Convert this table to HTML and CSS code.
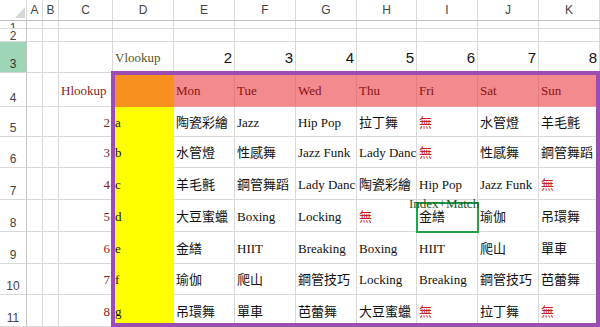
FILE: index.html
```html
<!DOCTYPE html>
<html lang="zh-Hant">
<head>
<meta charset="utf-8">
<title>Vlookup Hlookup</title>
<link rel="stylesheet" href="styles.css">
</head>
<body>
<div class="wrap">
  <div class="sheet">
    <!-- header row -->
    <div class="corner"><svg width="27" height="21" viewBox="0 0 27 21"><polygon points="25,7 25,18 15,18" fill="#d6d6d6"/></svg></div>
    <div class="ch">A</div><div class="ch">B</div><div class="ch">C</div><div class="ch">D</div><div class="ch">E</div><div class="ch">F</div><div class="ch">G</div><div class="ch">H</div><div class="ch">I</div><div class="ch">J</div><div class="ch">K</div>
    <!-- row 1 -->
    <div class="rh top">1</div><div class="c"></div><div class="c"></div><div class="c"></div><div class="c"></div><div class="c"></div><div class="c"></div><div class="c"></div><div class="c"></div><div class="c"></div><div class="c"></div><div class="c"></div>
    <!-- row 2 -->
    <div class="rh top">2</div><div class="c"></div><div class="c"></div><div class="c"></div><div class="c"></div><div class="c"></div><div class="c"></div><div class="c"></div><div class="c"></div><div class="c"></div><div class="c"></div><div class="c"></div>
    <!-- row 3 -->
    <div class="rh sel">3</div><div class="c"></div><div class="c"></div><div class="c"></div><div class="c olive">Vlookup</div><div class="c n">2</div><div class="c n">3</div><div class="c n">4</div><div class="c n">5</div><div class="c n">6</div><div class="c n">7</div><div class="c n">8</div>
    <!-- row 4 -->
    <div class="rh">4</div><div class="c"></div><div class="c"></div><div class="c dred">Hlookup</div><div class="c org"></div><div class="c pink">Mon</div><div class="c pink">Tue</div><div class="c pink">Wed</div><div class="c pink">Thu</div><div class="c pink">Fri</div><div class="c pink">Sat</div><div class="c pink">Sun</div>
    <!-- row 5 -->
    <div class="rh">5</div><div class="c"></div><div class="c"></div><div class="c dred r">2</div><div class="c yel">a</div><div class="c">陶瓷彩繪</div><div class="c">Jazz</div><div class="c">Hip Pop</div><div class="c">拉丁舞</div><div class="c red">無</div><div class="c">水管燈</div><div class="c">羊毛氈</div>
    <!-- row 6 -->
    <div class="rh">6</div><div class="c"></div><div class="c"></div><div class="c dred r">3</div><div class="c yel">b</div><div class="c">水管燈</div><div class="c">性感舞</div><div class="c">Jazz Funk</div><div class="c">Lady Dance</div><div class="c red">無</div><div class="c">性感舞</div><div class="c">鋼管舞蹈</div>
    <!-- row 7 -->
    <div class="rh">7</div><div class="c"></div><div class="c"></div><div class="c dred r">4</div><div class="c yel">c</div><div class="c">羊毛氈</div><div class="c">鋼管舞蹈</div><div class="c">Lady Dance</div><div class="c">陶瓷彩繪</div><div class="c">Hip Pop</div><div class="c">Jazz Funk</div><div class="c red">無</div>
    <!-- row 8 -->
    <div class="rh">8</div><div class="c"></div><div class="c"></div><div class="c dred r">5</div><div class="c yel">d</div><div class="c">大豆蜜蠟</div><div class="c">Boxing</div><div class="c">Locking</div><div class="c red">無</div><div class="c">金繕</div><div class="c">瑜伽</div><div class="c">吊環舞</div>
    <!-- row 9 -->
    <div class="rh">9</div><div class="c"></div><div class="c"></div><div class="c dred r">6</div><div class="c yel">e</div><div class="c">金繕</div><div class="c">HIIT</div><div class="c">Breaking</div><div class="c">Boxing</div><div class="c">HIIT</div><div class="c">爬山</div><div class="c">單車</div>
    <!-- row 10 -->
    <div class="rh">10</div><div class="c"></div><div class="c"></div><div class="c dred r">7</div><div class="c yel">f</div><div class="c">瑜伽</div><div class="c">爬山</div><div class="c">鋼管技巧</div><div class="c">Locking</div><div class="c">Breaking</div><div class="c">鋼管技巧</div><div class="c">芭蕾舞</div>
    <!-- row 11 -->
    <div class="rh">11</div><div class="c"></div><div class="c"></div><div class="c dred r">8</div><div class="c yel">g</div><div class="c">吊環舞</div><div class="c">單車</div><div class="c">芭蕾舞</div><div class="c">大豆蜜蠟</div><div class="c red">無</div><div class="c">拉丁舞</div><div class="c red">無</div>
  </div>
  <div class="frame"></div>
  <div class="hit"></div>
  <div class="label">Index+Match</div>
</div>
</body>
</html>
```

FILE: styles.css
```css
html, body {
  margin: 0;
  padding: 0;
  background: #ffffff;
}
.wrap {
  position: relative;
  width: 600px;
  height: 327px;
  overflow: hidden;
}
.sheet {
  display: grid;
  grid-template-columns: 27px 16px 16px 54px 61px 61px 61px 61px 60px 61px 61px 61px;
  grid-template-rows: 21px 8px 13px 31px 34px 30px 31px 32px 32px 32px 31px 32px;
  font-family: "Liberation Serif", "Noto Sans CJK TC", serif;
  font-size: 13px;
  color: #111;
}
.sheet > div {
  box-sizing: border-box;
  border-right: 1px solid #d9d9d9;
  border-bottom: 1px solid #d9d9d9;
  overflow: hidden;
  white-space: nowrap;
}
.corner {
  background: #fff;
  line-height: 0;
}
.corner svg { display: block; }
.ch {
  display: flex;
  align-items: center;
  justify-content: center;
  font-family: "Liberation Sans", "DejaVu Sans", sans-serif;
  font-size: 12px;
  color: #444;
  background: #fff;
}
.sheet > .ch, .sheet > .corner {
  border-bottom-color: #bfbfbf;
}
.rh {
  display: flex;
  align-items: flex-end;
  justify-content: center;
  font-family: "Liberation Sans", "DejaVu Sans", sans-serif;
  font-size: 12px;
  line-height: 14px;
  padding-bottom: 1px;
  color: #444;
}
.sheet > .rh { border-right-color: #c4c4c4; }
.rh.top {
  align-items: flex-start;
  padding-bottom: 0;
}
.rh.sel {
  background: #9fd5b7;
  color: #333;
}
.c {
  display: flex;
  align-items: center;
  padding: 2px 2px 0 2px;
  line-height: 16px;
}
.r { justify-content: flex-end; }
.n {
  justify-content: flex-end;
  font-family: "Liberation Sans", "DejaVu Sans", sans-serif;
  font-size: 15px;
  color: #111;
}
.olive { color: #5a5222; }
.dred { color: #8e1b1b; }
.red { color: #cc2020; }
.sheet > .org {
  background: #f7901e;
  border-color: #f7901e;
}
.sheet > .yel {
  background: #ffff00;
  border-color: #ffff00;
}
.sheet > .pink {
  background: #f38a8d;
  border-right-color: #e27d80;
  border-bottom-color: #e8a0a2;
  color: #8a1212;
}
.frame {
  position: absolute;
  left: 111px;
  top: 71px;
  width: 489px;
  height: 256px;
  box-sizing: border-box;
  border: 4px solid #9c4db4;
}
.hit {
  position: absolute;
  left: 416px;
  top: 202px;
  width: 63px;
  height: 31px;
  box-sizing: border-box;
  border: 2px solid #22a04a;
}
.label {
  position: absolute;
  left: 409px;
  top: 196px;
  font-family: "Liberation Serif", serif;
  font-size: 13px;
  line-height: 16px;
  color: #1b5a28;
}
```
